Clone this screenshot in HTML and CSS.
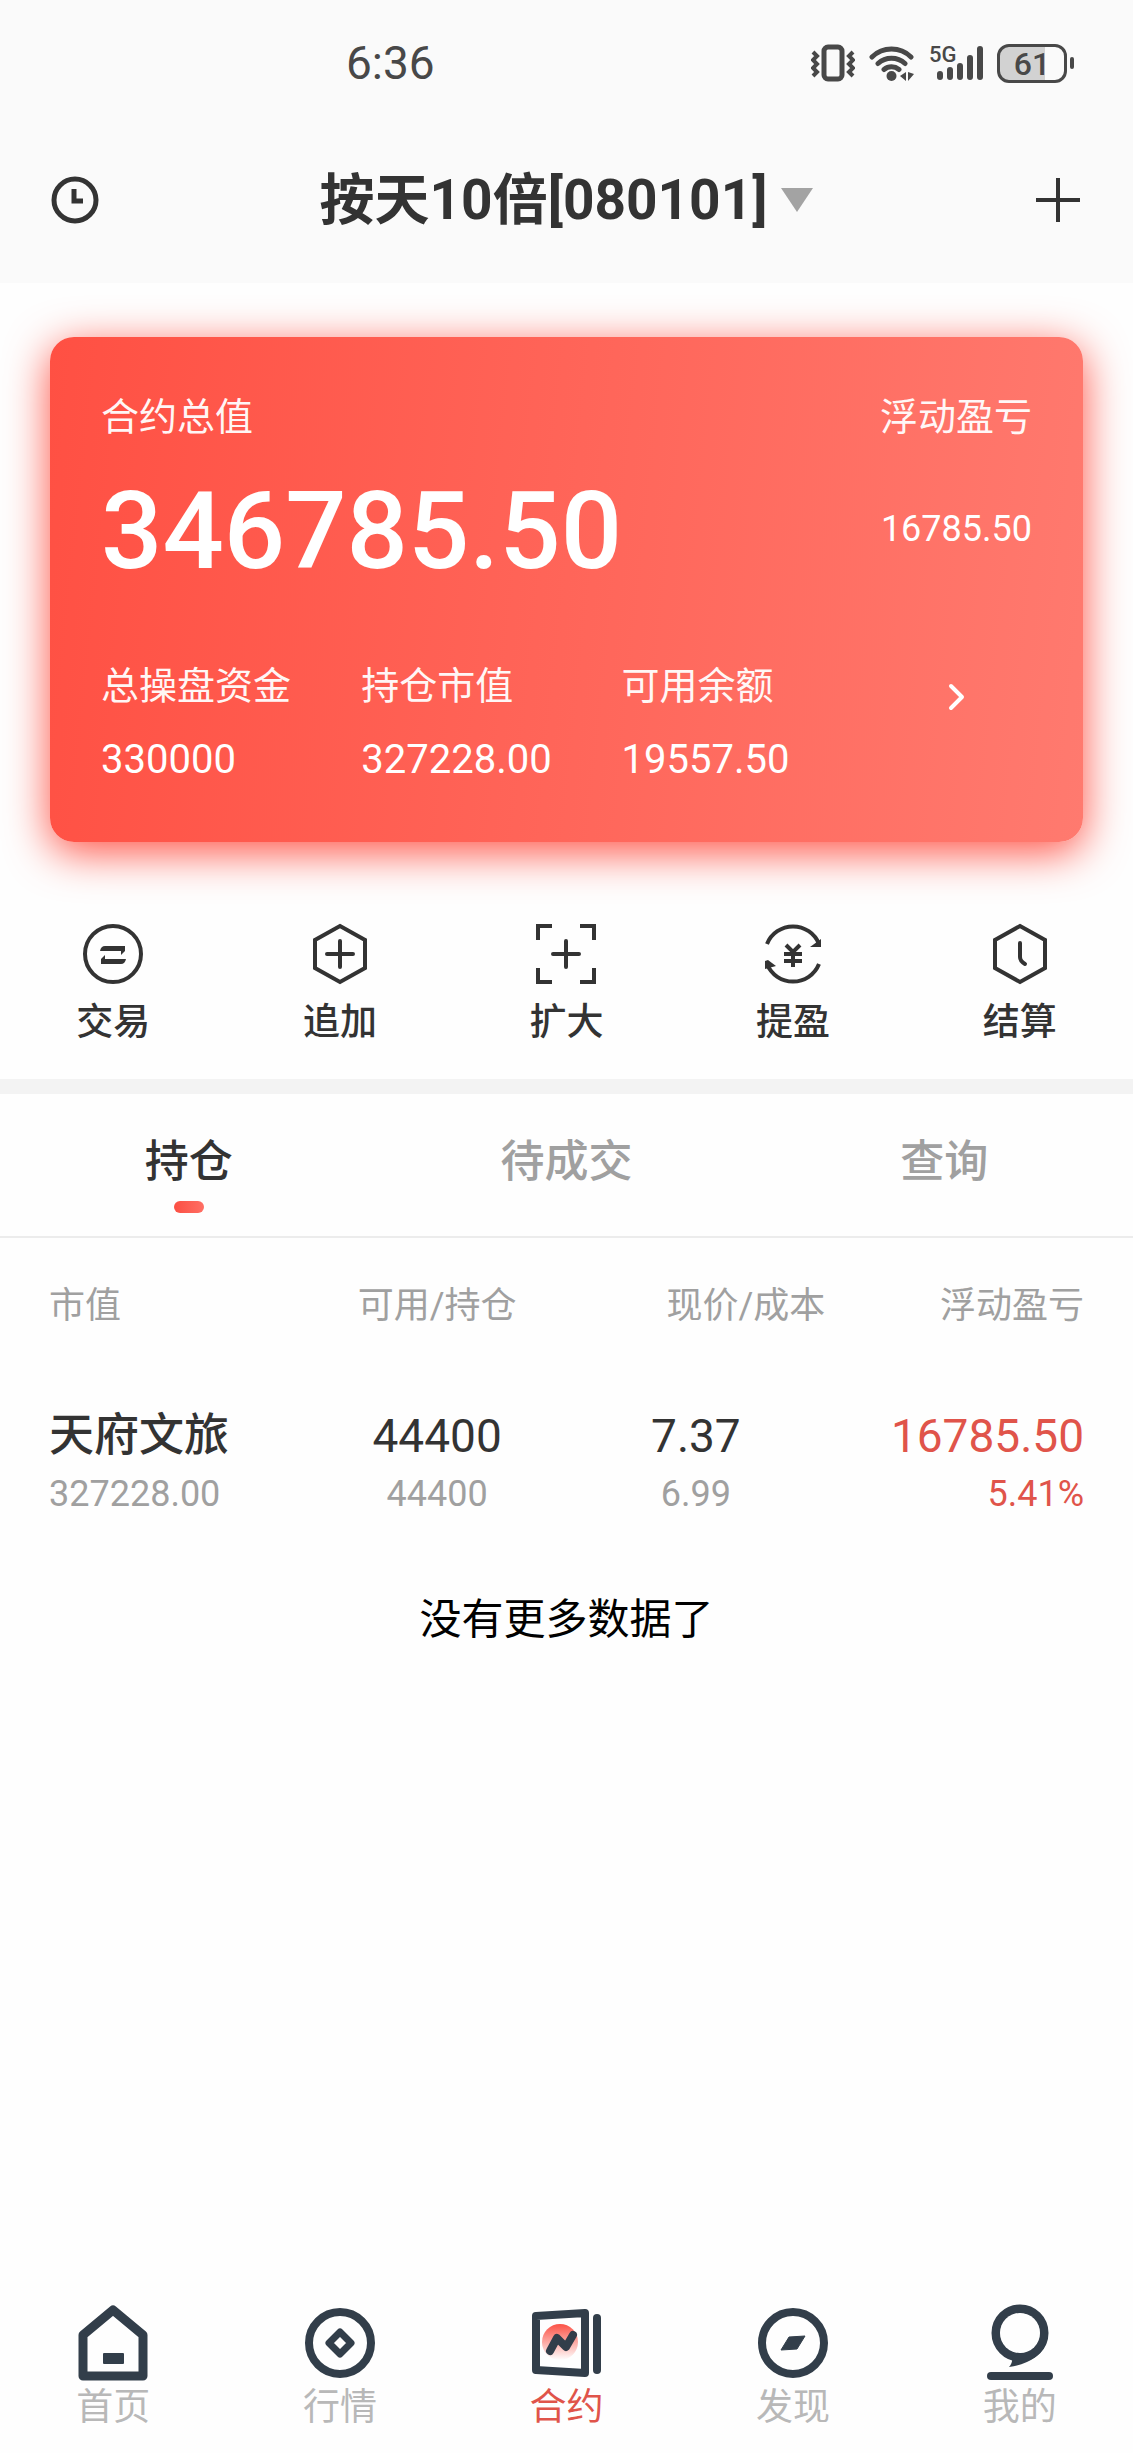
FILE: index.html
```html
<!DOCTYPE html>
<html lang="zh-CN">
<head>
    <meta charset="UTF-8">
    <meta name="viewport" content="width=device-width, initial-scale=1.0">
    <title>合约</title>
    <link rel="stylesheet" href="styles.css">
</head>
<body>

    <div class="statusbar">
        <span class="statusbar__time">6:36</span>
        <div class="statusbar__icons">
            <svg width="44" height="38" viewBox="0 0 44 38" fill="none" stroke="#484848" aria-hidden="true">
                <rect x="13" y="3" width="18" height="32" rx="4" stroke-width="5"/>
                <path d="M2 8l4 4-4 4 4 4-4 4 4 4-4 4M42 8l-4 4 4 4-4 4 4 4-4 4 4 4" stroke-width="4"/>
            </svg>
            <svg width="46" height="38" viewBox="0 0 46 38" fill="none" stroke="#484848" stroke-width="5" stroke-linecap="round" aria-hidden="true">
                <path d="M3 13a28 28 0 0 1 39 0M9 19.500a20 20 0 0 1 27 0M15 25.500a12 12 0 0 1 15 0"/>
                <circle cx="22.500" cy="32" r="5" fill="#484848" stroke="none"/>
                <path d="M37 28v9l-6-5zM39 28v9l6-7z" fill="#484848" stroke="none"/>
            </svg>
            <div class="signal">
                <span class="signal__type">5G</span>
                <svg width="54" height="38" viewBox="0 0 54 38" fill="none" stroke="#484848" stroke-width="6" stroke-linecap="round" aria-hidden="true">
                    <path d="M11 30v3M21 26v7M31 22v11M41 14v19M51 5v28"/>
                </svg>
            </div>
            <div class="battery">
                <span class="battery__body">61</span>
                <span class="battery__tip"></span>
            </div>
        </div>
    </div>

    <header class="header">
        <button class="header__button" aria-label="历史">
            <svg width="50" height="50" viewBox="0 0 50 50" fill="none" stroke="#333" stroke-width="5" aria-hidden="true">
                <circle cx="25" cy="25" r="21"/>
                <path d="M24 14v12h9"/>
            </svg>
        </button>
        <button class="header__title">
            <span>按天10倍[080101]</span>
            <span class="header__caret"></span>
        </button>
        <button class="header__button" aria-label="添加">
            <svg width="50" height="50" viewBox="0 0 50 50" fill="none" stroke="#333" stroke-width="4" aria-hidden="true">
                <path d="M25 3v44M3 25h44"/>
            </svg>
        </button>
    </header>

    <main class="content">
        <section class="card">
            <div class="card__top">
                <div>
                    <div class="card__label">合约总值</div>
                    <div class="card__total">346785.50</div>
                </div>
                <div class="card__profit">
                    <div class="card__label">浮动盈亏</div>
                    <div class="card__float">16785.50</div>
                </div>
            </div>
            <div class="card__bottom">
                <div>
                    <div class="card__label">总操盘资金</div>
                    <div class="card__value">330000</div>
                </div>
                <div>
                    <div class="card__label">持仓市值</div>
                    <div class="card__value">327228.00</div>
                </div>
                <div>
                    <div class="card__label">可用余额</div>
                    <div class="card__value">19557.50</div>
                </div>
                <a href="#" class="card__more" aria-label="详情">
                    <svg width="20" height="30" viewBox="0 0 20 30" fill="none" stroke="#fff" stroke-width="4" stroke-linecap="round" stroke-linejoin="round" aria-hidden="true">
                        <path d="M4 4l11 11L4 26"/>
                    </svg>
                </a>
            </div>
        </section>

        <nav class="actions">
            <a href="#" class="actions__item">
                <svg width="64" height="64" viewBox="0 0 64 64" fill="none" stroke="#333" stroke-width="4" aria-hidden="true">
                    <circle cx="32" cy="32" r="28"/>
                    <path d="M19 29q1-5 5-5h20v5l-4 4v-4zM45 37q-1 5-5 5H20v-5l4-4v4z" fill="#333" stroke="none"/>
                </svg>
                <span>交易</span>
            </a>
            <a href="#" class="actions__item">
                <svg width="64" height="64" viewBox="0 0 64 64" fill="none" stroke="#333" stroke-width="4" aria-hidden="true">
                    <path d="M32 4l25 14v28L32 60 7 46V18z"/>
                    <path d="M32 19v26M19 32h26" stroke-linecap="round"/>
                </svg>
                <span>追加</span>
            </a>
            <a href="#" class="actions__item">
                <svg width="64" height="64" viewBox="0 0 64 64" fill="none" stroke="#333" stroke-width="4" aria-hidden="true">
                    <path d="M4 18V4h14M46 4h14v14M60 46v14H46M18 60H4V46"/>
                    <path d="M32 19v26M19 32h26" stroke-linecap="round"/>
                </svg>
                <span>扩大</span>
            </a>
            <a href="#" class="actions__item">
                <svg width="64" height="64" viewBox="0 0 64 64" fill="none" stroke="#333" stroke-width="4" aria-hidden="true">
                    <path d="M6 22a28 28 0 0 1 52 0M58 42a28 28 0 0 1-52 0"/>
                    <path d="M60 17v8H49zM4 47v-8l3-1 8 6z" fill="#333" stroke="none"/>
                    <path d="M25 23l7 7 7-7M32 30v15M23 32h18M23 39h18"/>
                </svg>
                <span>提盈</span>
            </a>
            <a href="#" class="actions__item">
                <svg width="64" height="64" viewBox="0 0 64 64" fill="none" stroke="#333" stroke-width="4" aria-hidden="true">
                    <path d="M32 4l25 14v28L32 60 7 46V18z"/>
                    <path d="M32 21v14q0 4 5 7" stroke-linecap="round"/>
                </svg>
                <span>结算</span>
            </a>
        </nav>

        <div class="tabs" role="tablist">
            <button class="tabs__item tabs__item--active" role="tab" aria-selected="true">持仓</button>
            <button class="tabs__item" role="tab" aria-selected="false">待成交</button>
            <button class="tabs__item" role="tab" aria-selected="false">查询</button>
        </div>

        <table class="positions">
            <thead>
                <tr>
                    <th>市值</th>
                    <th>可用/持仓</th>
                    <th>现价/成本</th>
                    <th>浮动盈亏</th>
                </tr>
            </thead>
            <tbody>
                <tr>
                    <td><div class="positions__name">天府文旅</div><div class="positions__sub">327228.00</div></td>
                    <td><div class="positions__main">44400</div><div class="positions__sub">44400</div></td>
                    <td><div class="positions__main">7.37</div><div class="positions__sub">6.99</div></td>
                    <td class="positions__gain"><div class="positions__main">16785.50</div><div class="positions__sub">5.41%</div></td>
                </tr>
            </tbody>
        </table>

        <p class="empty">没有更多数据了</p>
    </main>

    <nav class="tabbar">
        <a href="#" class="tabbar__item">
            <svg width="80" height="80" viewBox="0 0 80 80" fill="none" stroke="#323e4a" stroke-width="9" stroke-linejoin="round" aria-hidden="true">
                <path d="M40 7l30 25v41H10V32z"/>
                <rect x="30" y="50" width="21" height="11" rx="1" fill="#323e4a" stroke="none"/>
            </svg>
            <span>首页</span>
        </a>
        <a href="#" class="tabbar__item">
            <svg width="80" height="80" viewBox="0 0 80 80" fill="none" stroke="#323e4a" stroke-width="8" stroke-linejoin="round" aria-hidden="true">
                <circle cx="40" cy="40" r="31"/>
                <path d="M40 29l11 11-11 11-11-11z" stroke-width="7"/>
            </svg>
            <span>行情</span>
        </a>
        <a href="#" class="tabbar__item tabbar__item--active">
            <svg width="80" height="80" viewBox="0 0 80 80" fill="none" stroke="#323e4a" stroke-width="8" stroke-linejoin="round" stroke-linecap="round" aria-hidden="true">
                <defs>
                    <linearGradient id="sun" x1="0" y1="0" x2="0" y2="1">
                        <stop offset="0" stop-color="#fb5246"/>
                        <stop offset="1" stop-color="#fb5246" stop-opacity="0"/>
                    </linearGradient>
                </defs>
                <path d="M10 13l49-3v60l-49-3z"/>
                <circle cx="34" cy="39" r="18" fill="url(#sun)" stroke="none"/>
                <path d="M24 48l7-13 9 9 7-12"/>
                <path d="M71 15v52"/>
            </svg>
            <span>合约</span>
        </a>
        <a href="#" class="tabbar__item">
            <svg width="80" height="80" viewBox="0 0 80 80" fill="none" stroke="#323e4a" stroke-width="8" aria-hidden="true">
                <circle cx="40" cy="40" r="31"/>
                <path d="M36 34l16-1-8 13-16 1z" fill="#323e4a" stroke-width="1" stroke-linejoin="round"/>
            </svg>
            <span>发现</span>
        </a>
        <a href="#" class="tabbar__item">
            <svg width="80" height="80" viewBox="0 0 80 80" fill="none" stroke="#323e4a" stroke-width="9" stroke-linecap="round" aria-hidden="true">
                <circle cx="40" cy="30" r="24"/>
                <path d="M32 54q1 6-3 10 28-4 37-23z" fill="#323e4a" stroke="none"/>
                <path d="M20 30a20 20 0 0 0 40 0a20 20 0 0 0-40 0z" fill="#fefefe" stroke="none"/>
                <path d="M11 73h58" stroke-width="8"/>
            </svg>
            <span>我的</span>
        </a>
    </nav>

</body>
</html>
```

FILE: styles.css
```css
:root {
    --color-bar-bg: #fafafa;
    --color-divider: #f3f3f3;
    --color-text: #333333;
    --color-muted: #a0a0a0;
    --color-tab-muted: #b8b8b8;
    --color-red: #e0544a;
    --page-padding: 50px;
    --font-family: Roboto, "Noto Sans CJK SC", sans-serif;
}

*,
*::before,
*::after {
    box-sizing: border-box;
}

body {
    margin: 0;
    min-height: 100vh;
    display: flex;
    flex-direction: column;
    font-family: var(--font-family);
    color: var(--color-text);
    background: #fefefe;
}

a { text-decoration: none; color: inherit; }

button {
    padding: 0;
    border: none;
    background: transparent;
    font-family: inherit;
    color: inherit;
    cursor: pointer;
}

svg { display: block; }

/* Status bar */
.statusbar {
    display: flex;
    justify-content: space-between;
    align-items: center;
    height: 126px;
    padding: 0 59px 0 346px;
    background: var(--color-bar-bg);
    color: #484848;
}

.statusbar__time { font-size: 46px; }

.statusbar__icons {
    display: flex;
    align-items: center;
    gap: 14px;
}

.signal { position: relative; }

.signal__type {
    position: absolute;
    top: 0;
    left: 0;
    font-size: 22px;
    line-height: 22px;
    font-weight: 500;
}

.battery {
    display: flex;
    align-items: center;
    gap: 3px;
}

.battery__body {
    width: 70px;
    height: 39px;
    border: 3px solid #484848;
    border-radius: 12px;
    background: linear-gradient(90deg, #d2d2d2 70%, #fafafa 70%);
    font-size: 32px;
    line-height: 34px;
    font-weight: 500;
    text-align: center;
}

.battery__tip {
    width: 4px;
    height: 12px;
    border-radius: 2px;
    background: #484848;
}

/* Header */
.header {
    display: flex;
    justify-content: space-between;
    align-items: center;
    height: 157px;
    padding: 0 var(--page-padding) 10px;
    background: var(--color-bar-bg);
}

.header__title {
    display: flex;
    align-items: center;
    gap: 14px;
    font-size: 55px;
    line-height: 64px;
    font-weight: 700;
}

.header__caret {
    border: 16px solid transparent;
    border-top: 24px solid #a3a3a3;
    border-bottom: 0;
}

/* Summary card */
.content { flex: 1; }

.card {
    margin: 54px var(--page-padding) 0;
    padding: 52px 51px 58px;
    border-radius: 24px;
    background: linear-gradient(96deg, #ff5043, #ff7a6f);
    box-shadow: 0 10px 44px #ff5043;
    color: #fff;
}

.card__top {
    display: flex;
    justify-content: space-between;
}

.card__label {
    font-size: 38px;
    line-height: 56px;
    opacity: 0.95;
}

.card__total {
    margin-top: 20px;
    font-size: 108px;
    line-height: 132px;
    font-weight: 500;
}

.card__profit { text-align: right; }

.card__float {
    margin-top: 62px;
    font-size: 36px;
    line-height: 44px;
}

.card__bottom {
    display: grid;
    grid-template-columns: 26fr 26fr 26fr 15fr;
    margin-top: 61px;
}

.card__value {
    margin-top: 22px;
    font-size: 40px;
    line-height: 48px;
}

.card__more {
    display: flex;
    justify-content: center;
    padding-top: 24px;
}

/* Quick actions */
.actions {
    display: grid;
    grid-template-columns: repeat(5, 1fr);
    padding: 80px 0 31px;
    border-bottom: 15px solid var(--color-divider);
}

.actions__item {
    display: flex;
    flex-direction: column;
    align-items: center;
    gap: 12px;
    font-size: 37px;
    line-height: 50px;
    font-weight: 500;
}

/* Tabs */
.tabs {
    display: grid;
    grid-template-columns: repeat(3, 1fr);
    height: 144px;
    border-bottom: 2px solid #ececec;
}

.tabs__item {
    display: flex;
    flex-direction: column;
    align-items: center;
    padding-top: 36px;
    font-size: 44px;
    line-height: 64px;
    font-weight: 500;
    color: var(--color-muted);
}

.tabs__item--active { color: var(--color-text); }

.tabs__item--active::after {
    content: "";
    width: 30px;
    height: 12px;
    margin-top: 7px;
    border-radius: 6px;
    background: linear-gradient(90deg, #fb4f43, #ff6f64);
}

/* Positions */
.positions {
    width: calc(100% - 98px);
    margin: 0 49px;
    table-layout: fixed;
    border-collapse: collapse;
    text-align: center;
}

.positions th,
.positions td {
    padding: 0;
    vertical-align: top;
}

.positions th {
    padding: 42px 0 70px;
    font-size: 36px;
    line-height: 52px;
    font-weight: 400;
    color: var(--color-muted);
}

.positions th:first-child,
.positions td:first-child { text-align: left; }

.positions th:nth-child(3),
.positions th:last-child,
.positions td:last-child { text-align: right; }

.positions__name,
.positions__main {
    font-size: 46px;
    line-height: 68px;
}

.positions__name {
    font-size: 45px;
    font-weight: 500;
}

.positions__sub {
    font-size: 36px;
    line-height: 48px;
    color: var(--color-muted);
}

.positions__gain,
.positions__gain .positions__sub { color: var(--color-red); }

.empty {
    margin: 72px 0;
    font-size: 42px;
    line-height: 60px;
    text-align: center;
    color: #000;
}

/* Bottom navigation */
.tabbar {
    display: grid;
    grid-template-columns: repeat(5, 1fr);
    padding-bottom: 20px;
}

.tabbar__item {
    display: flex;
    flex-direction: column;
    align-items: center;
    font-size: 37px;
    line-height: 50px;
    color: var(--color-tab-muted);
}

.tabbar__item--active { color: var(--color-red); }
```
